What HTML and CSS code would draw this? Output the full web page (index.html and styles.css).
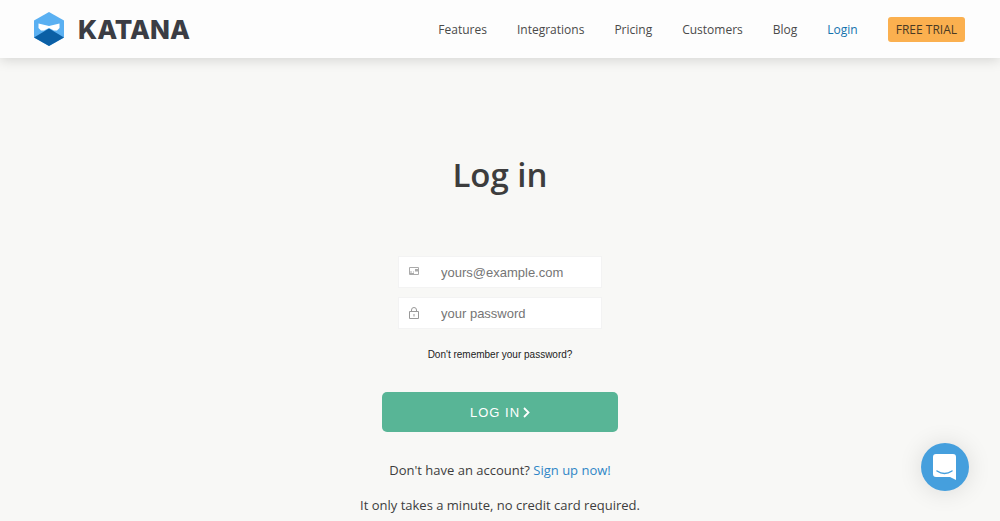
FILE: index.html
```html
<!DOCTYPE html>
<html lang="en">
<head>
  <meta charset="UTF-8">
  <meta name="viewport" content="width=device-width, initial-scale=1">
  <title>Log in - Katana</title>
  <link rel="stylesheet" href="styles.css">
</head>
<body>

<header class="navbar">
  <a href="#" class="logo">
    <svg class="logo-icon" viewBox="0 0 32 36" aria-hidden="true">
      <path fill="#5ab0f2" d="M16 1 31 9.500v17L16 35 1 26.500v-17z"/>
      <path fill="#0b5fa5" d="M16 17.500 31 26.500 16 35 1 26.500z"/>
      <path fill="#fff" d="M5.500 12.500 16 15l10.500-2.500V17L24 19.500h-3L16 17l-5 2.500H8L5.500 17z"/>
    </svg>
    <span>KATANA</span>
  </a>
  <nav>
    <ul class="nav-links">
      <li><a href="#">Features</a></li>
      <li><a href="#">Integrations</a></li>
      <li><a href="#">Pricing</a></li>
      <li><a href="#">Customers</a></li>
      <li><a href="#">Blog</a></li>
      <li><a href="#" class="current">Login</a></li>
      <li><a href="#" class="trial">FREE TRIAL</a></li>
    </ul>
  </nav>
</header>

<main class="container">
  <h1>Log in</h1>

  <form class="login-form">
    <div class="field">
      <label for="email" aria-label="Email">
        <svg width="12" height="12" viewBox="0 0 12 12">
          <path fill="none" stroke="#aaa" d="M1.500 1.500h9v7h-9z"/>
          <path fill="#aaa" d="M7 3h3v2.500H7zM2 5.500h2v1H2zM5 5.500h1v1H5zM2 7h4v1H2z"/>
        </svg>
      </label>
      <input type="email" id="email" placeholder="yours@example.com">
    </div>
    <div class="field">
      <label for="password" aria-label="Password">
        <svg width="12" height="12" viewBox="0 0 12 12">
          <path fill="none" stroke="#999" d="M1.500 4.500h9v7h-9zM3.500 4.500V3a2.500 2.500 0 0 1 5 0v1.500M6 7v2.500"/>
        </svg>
      </label>
      <input type="password" id="password" placeholder="your password">
    </div>
    <a href="#" class="forgot">Don't remember your password?</a>
    <button type="submit">
      <span>LOG IN</span>
      <svg width="7" height="11" viewBox="0 0 7 11" aria-hidden="true">
        <path fill="none" stroke="#fff" stroke-width="1.800" d="M1 1l4.500 4.500L1 10"/>
      </svg>
    </button>
  </form>

  <p>Don't have an account? <a href="#">Sign up now!</a></p>
  <p>It only takes a minute, no credit card required.</p>
</main>

<button class="chat" aria-label="Open chat">
  <svg width="24" height="26" viewBox="0 0 24 26">
    <path fill="#fff" d="M3 0h17a3 3 0 0 1 3 3v23l-6-3H3a3 3 0 0 1-3-3V3a3 3 0 0 1 3-3z"/>
    <path fill="none" stroke="#459fdd" stroke-width="1.500" stroke-linecap="round" d="M4 17q7.500 5 15 0"/>
  </svg>
</button>

</body>
</html>
```
FILE: styles.css
```css
* {
  box-sizing: border-box;
}
body {
  margin: 0;
  font-family: "Open Sans", sans-serif;
  font-size: 13px;
  color: #3d3d3d;
  background-color: #f8f8f6;
}
a {
  color: #2f86c6;
  text-decoration: none;
}
.navbar {
  display: flex;
  justify-content: space-between;
  align-items: center;
  height: 58px;
  padding: 0 35px 0 33px;
  background-color: #fdfdfd;
  box-shadow: 0 2px 12px rgba(0, 0, 0, 0.15);
}
.logo {
  display: flex;
  align-items: center;
  gap: 13px;
  color: #3b3d44;
  font-family: Inter, sans-serif;
  font-size: 26px;
  font-weight: 800;
}
.logo-icon {
  width: 32px;
  height: 36px;
}
.nav-links {
  display: flex;
  align-items: center;
  gap: 30px;
  margin: 0;
  padding: 0;
  list-style: none;
  font-size: 12px;
}
.nav-links a {
  color: #4a4a4a;
}
.nav-links .current {
  color: #1272ad;
}
.nav-links .trial {
  display: block;
  padding: 0 8px;
  line-height: 25px;
  color: #4a3a24;
  background-color: #fbb04f;
  border-radius: 3px;
}
.container {
  padding: 93px 20px 0;
  text-align: center;
}
h1 {
  margin: 0 0 57px;
  font-size: 33px;
  font-weight: 600;
  line-height: 48px;
}
.login-form {
  display: flex;
  flex-direction: column;
  align-items: center;
  font-family: "Liberation Sans", sans-serif;
}
.field {
  display: flex;
  width: 204px;
  height: 32px;
  margin-bottom: 9px;
  background-color: #fff;
  border: 1px solid #f3f3f3;
}
.field label {
  display: flex;
  align-items: center;
  padding: 0 9px;
}
.field input {
  flex: 1;
  min-width: 0;
  padding: 0 12px;
  border: 0;
  background: none;
  font-family: inherit;
  font-size: 13px;
}
.field input::placeholder {
  color: #757575;
}
.forgot {
  margin: 10px 0 30px;
  color: #222;
  font-size: 10px;
  line-height: 14px;
}
.login-form button {
  display: flex;
  justify-content: center;
  align-items: center;
  gap: 3px;
  width: 236px;
  height: 40px;
  border: 0;
  border-radius: 5px;
  color: #fff;
  background-color: #58b596;
  font-family: inherit;
  font-size: 13px;
  letter-spacing: 1px;
  cursor: pointer;
}
.container p {
  margin: 0 0 15px;
  line-height: 20px;
}
.login-form + p {
  margin-top: 28px;
}
.chat {
  position: fixed;
  right: 31px;
  bottom: 30px;
  display: flex;
  align-items: center;
  justify-content: center;
  width: 48px;
  height: 48px;
  padding: 0;
  border: 0;
  border-radius: 50%;
  background-color: #459fdd;
  box-shadow: 0 1px 24px rgba(0, 0, 0, 0.12);
  cursor: pointer;
}
```
